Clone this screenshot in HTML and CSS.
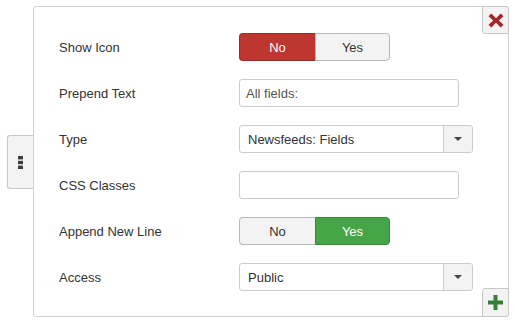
FILE: index.html
```html
<!DOCTYPE html>
<html>
<head>
<meta charset="utf-8">
<link rel="stylesheet" href="styles.css">
</head>
<body>
<div class="wrap">
  <div class="handle">
    <svg width="5" height="13" viewBox="0 0 5 13"><rect x="0" y="0" width="5" height="3.4" fill="#3d3d3d"/><rect x="0" y="4.8" width="5" height="3.4" fill="#3d3d3d"/><rect x="0" y="9.6" width="5" height="3.4" fill="#3d3d3d"/></svg>
  </div>
  <div class="panel">
    <div class="corner-btn close">
      <svg width="16" height="15" viewBox="0 0 16 15"><path d="M0.5 3.3 L3.3 0.5 L8 5.2 L12.7 0.5 L15.5 3.3 L10.8 7.5 L15.5 11.7 L12.7 14.5 L8 9.8 L3.3 14.5 L0.5 11.7 L5.2 7.5 Z" fill="#a3282c"/></svg>
    </div>
    <form class="form">
      <div class="row">
        <label class="lbl">Show Icon</label>
        <div class="toggle">
          <span class="opt no active-red">No</span>
          <span class="opt yes">Yes</span>
        </div>
      </div>
      <div class="row">
        <label class="lbl">Prepend Text</label>
        <div class="input">All fields:</div>
      </div>
      <div class="row">
        <label class="lbl">Type</label>
        <div class="select"><span class="val">Newsfeeds: Fields</span><span class="arrow"><i class="caret"></i></span></div>
      </div>
      <div class="row">
        <label class="lbl">CSS Classes</label>
        <div class="input"></div>
      </div>
      <div class="row">
        <label class="lbl">Append New Line</label>
        <div class="toggle">
          <span class="opt no">No</span>
          <span class="opt yes active-green">Yes</span>
        </div>
      </div>
      <div class="row">
        <label class="lbl">Access</label>
        <div class="select"><span class="val">Public</span><span class="arrow"><i class="caret"></i></span></div>
      </div>
    </form>
    <div class="corner-btn add">
      <svg width="15" height="15" viewBox="0 0 15 15"><path d="M5.5 0 H9.5 V5.5 H15 V9.5 H9.5 V15 H5.5 V9.5 H0 V5.5 H5.5 Z" fill="#378137"/></svg>
    </div>
  </div>
</div>
</body>
</html>
```
FILE: styles.css
```css
html, body {
  margin: 0;
  padding: 0;
  background: #fff;
}
body {
  font-family: "Liberation Sans", Arial, sans-serif;
  font-size: 13px;
  color: #333;
}
.wrap {
  display: flex;
  align-items: flex-start;
  padding: 6px 0 0 7px;
}
.handle {
  width: 25px;
  height: 52px;
  margin-top: 129px;
  background: #f3f3f3;
  border: 1px solid #c8c8c8;
  border-right: none;
  border-radius: 3px 0 0 3px;
  display: flex;
  align-items: center;
  justify-content: center;
}
.panel {
  position: relative;
  box-sizing: border-box;
  width: 476px;
  height: 311px;
  border: 1px solid #cfcfcf;
  border-radius: 3px;
  padding: 26px 0 0 25px;
}
.form {
  display: flex;
  flex-direction: column;
  gap: 18px;
  margin: 0;
}
.row {
  display: flex;
  align-items: center;
  height: 28px;
}
.lbl {
  width: 180px;
  color: #333;
}
.toggle {
  display: flex;
  width: 151px;
  height: 28px;
  box-sizing: border-box;
}
.opt {
  display: flex;
  align-items: center;
  justify-content: center;
  box-sizing: border-box;
  height: 28px;
  background: #f3f3f3;
  border: 1px solid #b8b8b8;
  color: #333;
}
.opt.no {
  width: 76px;
  border-radius: 4px 0 0 4px;
  border-right: none;
}
.opt.yes {
  width: 75px;
  border-radius: 0 4px 4px 0;
}
.opt.active-red {
  background: #bd362f;
  border-color: #9f2a25;
  color: #fff;
}
.opt.active-green {
  background: #46a546;
  border-color: #348a34;
  color: #fff;
}
.input {
  box-sizing: border-box;
  width: 220px;
  height: 28px;
  border: 1px solid #ccc;
  border-radius: 3px;
  padding: 0 6px;
  display: flex;
  align-items: center;
  color: #555;
}
.select {
  box-sizing: border-box;
  width: 234px;
  height: 28px;
  border: 1px solid #ccc;
  border-radius: 3px;
  display: flex;
  align-items: stretch;
}
.select .val {
  flex: 1;
  display: flex;
  align-items: center;
  padding-left: 8px;
  color: #333;
}
.select .arrow {
  width: 28px;
  background: #f3f3f3;
  border-left: 1px solid #ccc;
  border-radius: 0 3px 3px 0;
  display: flex;
  align-items: center;
  justify-content: center;
}
.caret {
  display: block;
  width: 0;
  height: 0;
  border-left: 4px solid transparent;
  border-right: 4px solid transparent;
  border-top: 4px solid #444;
}
.corner-btn {
  position: absolute;
  right: -1px;
  width: 27px;
  height: 28px;
  box-sizing: border-box;
  background: #f3f3f3;
  border: 1px solid #c8c8c8;
  display: flex;
  align-items: center;
  justify-content: center;
}
.corner-btn.close {
  top: -1px;
  border-radius: 0 3px 0 3px;
}
.corner-btn.add {
  bottom: -1px;
  height: 29px;
  border-radius: 3px 0 3px 0;
}
```
